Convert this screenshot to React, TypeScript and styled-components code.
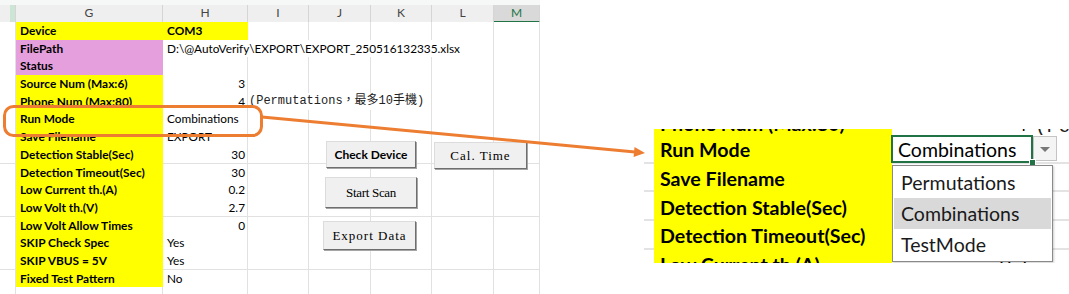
import styled, { createGlobalStyle } from "styled-components";

const YELLOW = "#ffff00";
const PLUM = "#e49fdc";
const GRID = "#e1e1e1";
const ORANGE = "#ed7d31";
const EXCEL_GREEN = "#217346";

const GlobalStyle = createGlobalStyle`
  html, body { margin: 0; padding: 0; background: #ffffff; }
  body {
    width: 1069px;
    height: 294px;
    overflow: hidden;
    font-family: Lato, "Liberation Sans", "Noto Sans CJK TC", sans-serif;
    color: #000;
  }
`;

const Stage = styled.div`
  position: relative;
  display: flex;
  align-items: flex-start;
  width: 1069px;
  height: 294px;
  overflow: hidden;
`;

// ---- left: the worksheet ----

const SHEET_COLS = "16px 147px 85px 61px 62px 61px 62px 46px";

const Sheet = styled.div`
  position: relative;
  flex: none;
  width: 540px;
  height: 294px;
  overflow: hidden;
`;

const HeaderRow = styled.div`
  display: grid;
  grid-template-columns: ${SHEET_COLS};
  height: 22px;
  padding-top: 5px;
  box-sizing: border-box;
  background: #f6f8f8;
`;

const ColHeader = styled.div<{ $selected?: boolean }>`
  box-sizing: border-box;
  background: ${p => (p.$selected ? "#d9d9d9" : "#efefef")};
  border-right: 1px solid #d5d5d5;
  border-bottom: ${p => (p.$selected ? `2px solid ${EXCEL_GREEN}` : "1px solid #d0d0d0")};
  color: ${p => (p.$selected ? EXCEL_GREEN : "#444")};
  font-size: 12px;
  line-height: 16px;
  text-align: center;
`;

const CornerHeader = styled(ColHeader)`
  background: linear-gradient(90deg, #efefef 10px, #cde5d5 10px);
`;

const Row = styled.div`
  display: grid;
  grid-template-columns: ${SHEET_COLS};
  height: 17.7px;
`;

const Cell = styled.div<{ $fill?: string; $bold?: boolean; $right?: boolean; $span?: number }>`
  grid-column: span ${p => p.$span ?? 1};
  box-sizing: border-box;
  min-width: 0;
  padding: 0 ${p => (p.$right ? 2 : 3)}px 0 4px;
  background: ${p => p.$fill ?? "#fff"};
  border-right: 1px solid ${p => p.$fill ?? GRID};
  border-bottom: 1px solid ${p => p.$fill ?? GRID};
  font-size: ${p => (p.$bold ? 11.9 : 11.8)}px;
  font-weight: ${p => (p.$bold ? 700 : 400)};
  line-height: 17.5px;
  text-align: ${p => (p.$right ? "right" : "left")};
  white-space: nowrap;
`;

const NoteCell = styled(Cell)`
  padding-left: 1px;
  font-family: "Liberation Mono", "Noto Sans CJK TC", monospace;
  font-size: 12px;
  color: #222;
`;

const SheetButton = styled.button<{ $x: number; $y: number; $w: number; $h: number; $serif?: boolean; $track?: number }>`
  position: absolute;
  left: ${p => p.$x}px;
  top: ${p => p.$y}px;
  width: ${p => p.$w}px;
  height: ${p => p.$h}px;
  box-sizing: border-box;
  margin: 0;
  padding: 0;
  background: #f0f0f0;
  border: 1px solid;
  border-color: #dcdcdc #6e6e6e #6e6e6e #dcdcdc;
  box-shadow: 1px 1px 0 #a5a5a5;
  color: #000;
  font-family: ${p => (p.$serif ? `"Liberation Serif", "Noto Sans CJK TC", serif` : `Lato, "Liberation Sans", sans-serif`)};
  font-weight: ${p => (p.$serif ? 400 : 700)};
  font-size: ${p => (p.$serif ? 13 : 12)}px;
  letter-spacing: ${p => p.$track ?? 0}px;
`;

// ---- right: zoomed callout of the run mode dropdown ----

const ZOOM_COLS = "10px 238px 141px 36px";
const ZOOM_LINE = "#e3e3e3";

const Callout = styled.div`
  position: relative;
  flex: none;
  margin: 129px 0 0 104px;
  width: 425px;
  height: 134px;
  overflow: hidden;
`;

const ZoomBody = styled.div`
  margin-top: -22.7px;
`;

const ZoomRow = styled.div`
  display: grid;
  grid-template-columns: ${ZOOM_COLS};
  height: 28.7px;
`;

const ZoomCell = styled.div<{ $fill?: string; $bold?: boolean; $right?: boolean; $active?: boolean }>`
  position: relative;
  z-index: ${p => (p.$active ? 1 : 0)};
  box-sizing: border-box;
  display: flex;
  align-items: center;
  justify-content: ${p => (p.$right ? "flex-end" : "flex-start")};
  padding: 3px 6px 0;
  background: ${p => p.$fill ?? "#fff"};
  border-bottom: 2px solid ${p => p.$fill ?? ZOOM_LINE};
  font-size: ${p => (p.$bold ? 19.6 : 19.5)}px;
  font-weight: ${p => (p.$bold ? 700 : 400)};
  white-space: nowrap;

  ${p =>
    p.$active &&
    `
    &::after {
      content: "";
      position: absolute;
      left: -1px; top: 0; right: 0; bottom: -1.5px;
      border: 2px solid ${EXCEL_GREEN};
    }
    &::before {
      content: "";
      position: absolute;
      right: -3px; bottom: -4px;
      width: 5px; height: 5px;
      background: ${EXCEL_GREEN};
      border: 1px solid #fff;
      z-index: 2;
    }
  `}
`;

const ZoomNote = styled(ZoomCell)`
  padding: 3px 0 0 2px;
  font-family: "Liberation Mono", "Noto Sans CJK TC", monospace;
  font-size: 19.5px;
  color: #222;
`;

const DropCell = styled(ZoomCell)`
  padding: 0;
`;

const DropButton = styled.div`
  position: relative;
  box-sizing: border-box;
  width: 24px;
  height: 25px;
  background: #f4f4f4;
  border: 1px solid #c4c4c4;

  &::after {
    content: "";
    position: absolute;
    left: 6px;
    top: 10px;
    border-left: 5px solid transparent;
    border-right: 5px solid transparent;
    border-top: 5px solid #777;
  }
`;

const OptionList = styled.ul`
  position: absolute;
  z-index: 3;
  left: 248px;
  top: 36px;
  width: 161px;
  margin: 0;
  padding: 1px;
  box-sizing: border-box;
  list-style: none;
  background: #fff;
  border: 1px solid #8a8a8a;
  box-shadow: 1px 1px 2px rgba(0, 0, 0, 0.2);
`;

const OptionItem = styled.li<{ $hot?: boolean }>`
  display: flex;
  align-items: center;
  height: 31px;
  padding-left: 7px;
  background: ${p => (p.$hot ? "#d9d9d9" : "transparent")};
  font-size: 19.5px;
  color: #1a1a1a;
`;

const Overlay = styled.svg`
  position: absolute;
  left: 0;
  top: 0;
  z-index: 10;
  pointer-events: none;
`;

type Setting = {
  label: string;
  value?: string;
  labelFill?: string;
  valueFill?: string;
  boldValue?: boolean;
  right?: boolean;
  span?: number;
  note?: string;
};

const NOTE = "(Permutations，最多10手機)";

const settings: Setting[] = [
  { label: "Device", value: "COM3", labelFill: YELLOW, valueFill: YELLOW, boldValue: true },
  { label: "FilePath", value: "D:\\@AutoVerify\\EXPORT\\EXPORT_250516132335.xlsx", labelFill: PLUM, span: 5 },
  { label: "Status", labelFill: PLUM },
  { label: "Source Num (Max:6)", value: "3", right: true },
  { label: "Phone Num (Max:80)", value: "4", right: true, note: NOTE },
  { label: "Run Mode", value: "Combinations" },
  { label: "Save Filename", value: "EXPORT" },
  { label: "Detection Stable(Sec)", value: "30", right: true },
  { label: "Detection Timeout(Sec)", value: "30", right: true },
  { label: "Low Current th.(A)", value: "0.2", right: true },
  { label: "Low Volt th.(V)", value: "2.7", right: true },
  { label: "Low Volt Allow Times", value: "0", right: true },
  { label: "SKIP Check Spec", value: "Yes" },
  { label: "SKIP VBUS = 5V", value: "Yes" },
  { label: "Fixed Test Pattern", value: "No" },
];

const columns = ["G", "H", "I", "J", "K", "L", "M"];

const SettingRow = ({ s }: { s: Setting }) => {
  const valueSpan = s.span ?? 1;
  const noteSpan = s.note ? 3 : 0;
  const rest = 6 - valueSpan - noteSpan;
  return (
    <Row>
      <Cell />
      <Cell $fill={s.labelFill ?? YELLOW} $bold>{s.label}</Cell>
      <Cell $fill={s.valueFill} $bold={s.boldValue} $right={s.right} $span={valueSpan}>
        {s.value}
      </Cell>
      {s.note && <NoteCell $span={3}>{s.note}</NoteCell>}
      {Array.from({ length: rest }).map((_, i) => (
        <Cell key={i} />
      ))}
    </Row>
  );
};

// the slice of rows the callout magnifies (Phone Num .. Low Current)
const zoomed = settings.slice(4, 10);

export default function App() {
  return (
    <>
      <GlobalStyle />
      <Stage>
        <Sheet>
          <HeaderRow>
            <CornerHeader />
            {columns.map(c => (
              <ColHeader key={c} $selected={c === "M"}>{c}</ColHeader>
            ))}
          </HeaderRow>
          {settings.map(s => (
            <SettingRow key={s.label} s={s} />
          ))}
          <Row>
            {Array.from({ length: 8 }).map((_, i) => (
              <Cell key={i} />
            ))}
          </Row>

          <SheetButton $x={326} $y={141} $w={90} $h={27}>Check Device</SheetButton>
          <SheetButton $x={434} $y={142} $w={93} $h={27} $serif $track={1}>Cal. Time</SheetButton>
          <SheetButton $x={325} $y={177} $w={92} $h={31} $serif $track={-0.3}>Start Scan</SheetButton>
          <SheetButton $x={323} $y={221} $w={93} $h={29} $serif $track={1}>Export Data</SheetButton>
        </Sheet>

        <Callout>
          <ZoomBody>
            {zoomed.map(s => {
              const active = s.label === "Run Mode";
              return (
                <ZoomRow key={s.label}>
                  <ZoomCell />
                  <ZoomCell $fill={YELLOW} $bold>{s.label}</ZoomCell>
                  <ZoomCell $right={s.right} $active={active}>{s.value}</ZoomCell>
                  {s.note ? (
                    <ZoomNote>{s.note}</ZoomNote>
                  ) : active ? (
                    <DropCell>
                      <DropButton />
                    </DropCell>
                  ) : (
                    <ZoomCell />
                  )}
                </ZoomRow>
              );
            })}
          </ZoomBody>
          <OptionList>
            <OptionItem>Permutations</OptionItem>
            <OptionItem $hot>Combinations</OptionItem>
            <OptionItem>TestMode</OptionItem>
          </OptionList>
        </Callout>

        <Overlay width={1069} height={294} viewBox="0 0 1069 294">
          <rect x={4.5} y={106.5} width={257} height={29} rx={9} fill="none" stroke={ORANGE} strokeWidth={3} />
          <line x1={262} y1={117} x2={635} y2={152} stroke={ORANGE} strokeWidth={3} />
          <polygon points="645,153 634.5,147 633.6,157" fill={ORANGE} />
        </Overlay>
      </Stage>
    </>
  );
}
